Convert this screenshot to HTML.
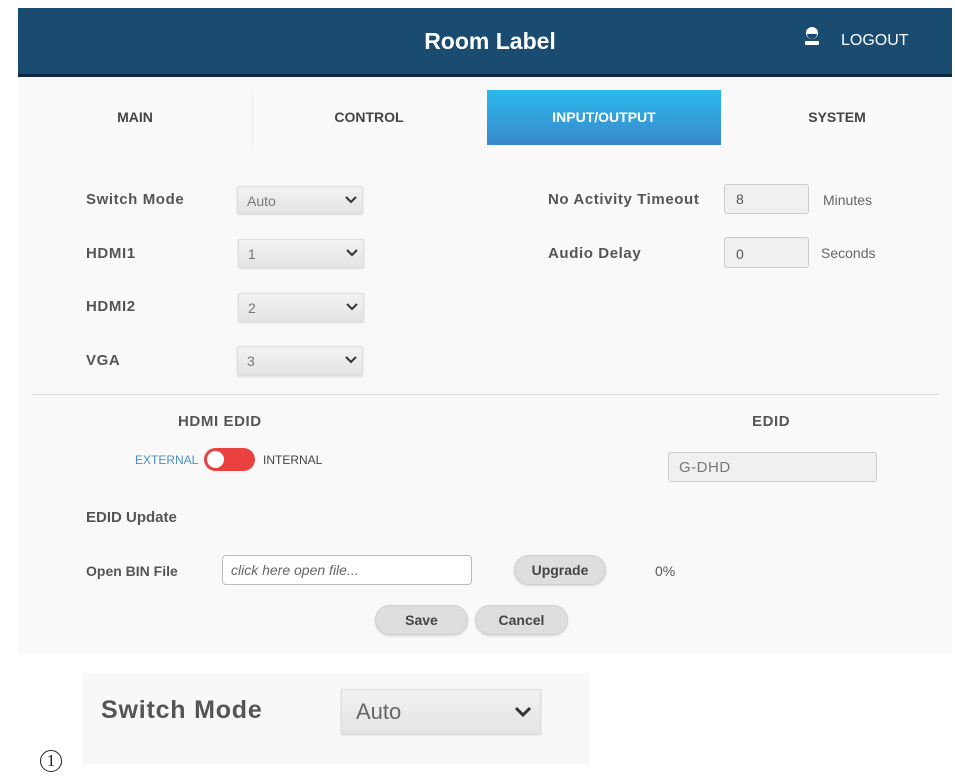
<!DOCTYPE html>
<html><head><meta charset="utf-8"><style>
*{margin:0;padding:0;box-sizing:border-box}
body{width:955px;height:782px;background:#fff;position:relative;font-family:"Liberation Sans",sans-serif;overflow:hidden}
.a{position:absolute}
.lbl{position:absolute;font-weight:bold;color:#555;font-size:15px;letter-spacing:0.6px}
.sel{position:absolute;width:126px;height:28px;background:linear-gradient(#f2f2f2,#e4e4e4);border:1px solid #ddd;border-radius:2px;box-shadow:0 1px 2px rgba(0,0,0,.12);font-size:14px;color:#777;padding:6px 9px}
.sel svg{position:absolute;right:5px;top:9px}
.inp{position:absolute;background:#f0f0f0;border:1px solid #ccc;border-radius:3px;font-size:14px;color:#555}
.btn{position:absolute;background:#dedede;border:1px solid #d0d0d0;border-radius:15px;box-shadow:0 1px 2px rgba(0,0,0,.15);font-weight:bold;color:#444;font-size:14px;text-align:center}
.tab{position:absolute;top:90px;height:55px;width:234px;text-align:center;line-height:55px;font-weight:bold;font-size:14px;color:#444}
</style></head><body>
<div class="a" style="left:18px;top:8px;width:934px;height:646px;background:#f9f9f9"></div>
<div class="a" style="left:18px;top:8px;width:934px;height:67px;background:#1a4c71"></div>
<div class="a" style="left:18px;top:74px;width:934px;height:3px;background:#0f2a40"></div>
<div class="a" style="left:0;top:28px;width:980px;text-align:center;color:#fff;font-weight:bold;font-size:23px">Room Label</div>
<svg class="a" style="left:803px;top:26px" width="18" height="20" viewBox="0 0 18 20"><circle cx="9" cy="7" r="6" fill="#fff"/><path d="M4 8h10a5 5 0 0 1-10 0z" fill="#1a4c71"/><rect x="2" y="15" width="14" height="4" rx="1" fill="#fff"/></svg>
<div class="a" style="left:841px;top:32px;color:#fff;font-size:16px">LOGOUT</div>
<div class="a" style="left:18px;top:90px;width:934px;height:55px;background:#fafafa"></div>
<div class="a" style="left:252px;top:90px;width:1px;height:55px;background:#ececec"></div>
<div class="tab" style="left:18px">MAIN</div>
<div class="tab" style="left:252px">CONTROL</div>
<div class="tab" style="left:487px;background:linear-gradient(#2bb9ec,#3a88cc);color:#fff">INPUT/OUTPUT</div>
<div class="tab" style="left:720px">SYSTEM</div>

<div class="lbl" style="left:86px;top:191px">Switch Mode</div>
<div class="sel" style="left:237px;top:186px">Auto<svg width="12" height="8"><path d="M1 1l5 5 5-5" stroke="#333" stroke-width="2" fill="none"/></svg></div>
<div class="lbl" style="left:86px;top:245px">HDMI1</div>
<div class="sel" style="left:238px;top:239px;height:29px">1<svg width="12" height="8"><path d="M1 1l5 5 5-5" stroke="#333" stroke-width="2" fill="none"/></svg></div>
<div class="lbl" style="left:86px;top:298px">HDMI2</div>
<div class="sel" style="left:238px;top:293px;height:29px">2<svg width="12" height="8"><path d="M1 1l5 5 5-5" stroke="#333" stroke-width="2" fill="none"/></svg></div>
<div class="lbl" style="left:86px;top:352px">VGA</div>
<div class="sel" style="left:237px;top:346px;height:30px">3<svg width="12" height="8"><path d="M1 1l5 5 5-5" stroke="#333" stroke-width="2" fill="none"/></svg></div>

<div class="lbl" style="left:548px;top:191px">No Activity Timeout</div>
<div class="inp" style="left:724px;top:184px;width:85px;height:30px;padding:6px 11px">8</div>
<div class="a" style="left:823px;top:192px;font-size:14px;color:#666">Minutes</div>
<div class="lbl" style="left:548px;top:245px">Audio Delay</div>
<div class="inp" style="left:724px;top:237px;width:85px;height:31px;padding:8px 11px">0</div>
<div class="a" style="left:821px;top:245px;font-size:14px;color:#666">Seconds</div>

<div class="a" style="left:32px;top:394px;width:907px;height:1px;background:#ddd"></div>
<div class="lbl" style="left:178px;top:413px">HDMI EDID</div>
<div class="lbl" style="left:752px;top:413px">EDID</div>
<div class="a" style="left:135px;top:453px;font-size:12px;color:#4a90c8">EXTERNAL</div>
<div class="a" style="left:204px;top:448px;width:51px;height:23px;border-radius:12px;background:#e8413f"></div>
<div class="a" style="left:207px;top:451px;width:17px;height:17px;border-radius:50%;background:#fff"></div>
<div class="a" style="left:263px;top:453px;font-size:12px;color:#444">INTERNAL</div>
<div class="inp" style="left:668px;top:452px;width:209px;height:30px;padding:6px 10px;font-size:15px;color:#777;letter-spacing:0.5px">G-DHD</div>

<div class="lbl" style="left:86px;top:509px;letter-spacing:0">EDID Update</div>
<div class="lbl" style="left:86px;top:563px;font-size:14px;letter-spacing:0">Open BIN File</div>
<div class="a" style="left:222px;top:555px;width:250px;height:30px;background:#fff;border:1px solid #bbb;border-radius:4px;font-style:italic;color:#666;font-size:14px;padding:6px 8px">click here open file...</div>
<div class="btn" style="left:514px;top:555px;width:92px;height:30px;line-height:28px">Upgrade</div>
<div class="a" style="left:655px;top:563px;font-size:14px;color:#555">0%</div>
<div class="btn" style="left:375px;top:605px;width:93px;height:30px;line-height:28px">Save</div>
<div class="btn" style="left:475px;top:605px;width:93px;height:30px;line-height:28px">Cancel</div>

<div class="a" style="left:82px;top:673px;width:508px;height:91px;background:#f8f8f8"></div>
<div class="a" style="left:101px;top:696px;font-size:25px;font-weight:bold;color:#555;letter-spacing:0.8px">Switch Mode</div>
<div class="a" style="left:341px;top:689px;width:200px;height:45px;background:linear-gradient(#f2f2f2,#e4e4e4);border:1px solid #ddd;box-shadow:0 1px 2px rgba(0,0,0,.15);font-size:22px;color:#666;padding:9px 14px">Auto<svg style="position:absolute;right:8px;top:16px" width="18" height="12"><path d="M2 2l7 7 7-7" stroke="#333" stroke-width="3" fill="none"/></svg></div>
<div class="a" style="left:40px;top:750px;width:22px;height:22px;border:1px solid #222;border-radius:50%;font-family:'Liberation Serif',serif;font-size:17px;color:#222;text-align:center;line-height:20px">1</div>
</body></html>
